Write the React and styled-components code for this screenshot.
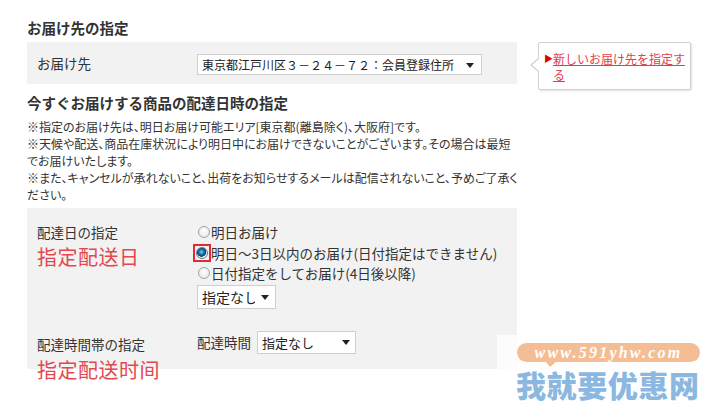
import React from 'react'
import styled, { createGlobalStyle } from 'styled-components'

const GlobalStyle = createGlobalStyle`
  html, body {
    margin: 0;
    padding: 0;
    background: #fff;
  }
  body {
    font-family: "Noto Sans CJK JP", "Noto Sans", sans-serif;
    color: #333;
  }
`

const Page = styled.div`
  position: relative;
  width: 714px;
  height: 406px;
  overflow: hidden;
  padding: 18px 0 0 27px;
  box-sizing: border-box;
`

const Heading = styled.h2`
  margin: ${p => p.$top || 0}px 0 4px;
  font-size: 14.5px;
  line-height: 20px;
  font-weight: bold;
  color: #333;
`

const TopRow = styled.div`
  display: flex;
  align-items: flex-start;
`

const AddressBox = styled.div`
  width: 490px;
  height: 42px;
  box-sizing: border-box;
  padding: 0 10px;
  background: #f2f2f2;
  display: grid;
  grid-template-columns: 160px 1fr;
  align-items: center;
`

const Label = styled.div`
  font-size: 13.5px;
  line-height: 20px;
  color: #333;
  padding-top: ${p => p.$pad || 0}px;
`

const SelectWrap = styled.span`
  position: relative;
  display: inline-block;
  &::after {
    content: '';
    position: absolute;
    right: ${p => p.$caret || 8}px;
    top: 50%;
    margin-top: -2px;
    border-left: 4px solid transparent;
    border-right: 4px solid transparent;
    border-top: 5px solid #222;
    pointer-events: none;
  }
`

const Select = styled.select`
  appearance: none;
  -webkit-appearance: none;
  display: block;
  width: ${p => p.$w}px;
  height: ${p => p.$h}px;
  box-sizing: border-box;
  margin: 0;
  padding: 0 20px 0 4px;
  border: 1px solid #cfcfcf;
  border-radius: 0;
  background: #fff;
  font-family: "Noto Sans CJK JP", sans-serif;
  font-size: ${p => p.$fs}px;
  color: #222;
  outline: none;
`

const Tip = styled.div`
  position: relative;
  margin: 0 0 -6px 21px;
  width: 153px;
  box-sizing: border-box;
  padding: 8px 3px 6px 5px;
  background: #fff;
  border: 1px solid #d2d2d2;
  border-radius: 2px;
  box-shadow: 1px 1px 2px rgba(0, 0, 0, 0.12);
  display: flex;
  &::before, &::after {
    content: '';
    position: absolute;
    top: 15px;
    border-top: 7px solid transparent;
    border-bottom: 7px solid transparent;
  }
  &::before {
    left: -9px;
    border-right: 8px solid #d2d2d2;
  }
  &::after {
    left: -7px;
    border-right: 8px solid #fff;
  }
`

const TipArrow = styled.span`
  width: 9px;
  flex: none;
  color: #e10000;
  font-size: 9px;
  line-height: 16px;
`

const TipLink = styled.a`
  width: 134px;
  font-size: 12px;
  line-height: 16px;
  color: #e0404c;
  text-decoration: underline;
  cursor: pointer;
`

const Notes = styled.div`
  width: 490px;
  margin-top: 5px;
  font-size: 12px;
  line-height: 17px;
  font-feature-settings: "palt";
  white-space: nowrap;
  color: #333;
`

const DateBox = styled.div`
  width: 490px;
  margin-top: 5px;
  box-sizing: border-box;
  padding: 14px 10px 15px;
  background: #f2f2f2;
`

const Section = styled.div`
  display: grid;
  grid-template-columns: 160px 1fr;
  margin-top: ${p => p.$top || 0}px;
`

const Annotation = styled.div`
  margin-top: ${p => p.$top}px;
  margin-bottom: ${p => p.$overhang ? -p.$overhang : 0}px;
  font-family: "Noto Sans CJK SC", "Noto Sans CJK JP", sans-serif;
  font-size: 20px;
  line-height: 24px;
  letter-spacing: 0.5px;
  color: #e3474f;
`

const RadioRow = styled.label`
  display: flex;
  align-items: center;
  height: 20.5px;
  font-size: 13.5px;
  color: #333;
  white-space: nowrap;
`

const Radio = styled.input`
  appearance: none;
  -webkit-appearance: none;
  flex: none;
  margin: 0 1px 0 1px;
  width: 12px;
  height: 12px;
  border-radius: 50%;
  border: 1px solid #a3a3a3;
  box-sizing: border-box;
  background: radial-gradient(circle at 50% 40%, #fff 0%, #e2e2e2 100%);
  &:checked {
    border-color: #5d7f99;
    background: radial-gradient(circle at 45% 40%, #7fd0f5 0%, #1b6fa6 32%, #0b3e66 55%, #dfe9f0 60%, #f4f8fb 100%);
  }
`

const Highlight = styled.span`
  display: inline-flex;
  align-items: center;
  justify-content: center;
  width: 18px;
  height: 18px;
  box-sizing: border-box;
  margin: 0 0 0 -4px;
  border: 2px solid #e22a2f;
  & > input {
    margin: 0;
  }
`

const TimeRow = styled.div`
  display: flex;
  align-items: center;
  gap: 6px;
  font-size: 13.5px;
  color: #333;
`

const Watermark = styled.div`
  position: absolute;
  left: 497px;
  top: 335px;
  width: 215px;
  height: 71px;
  background: rgba(255, 255, 255, 0.72);
`

const Pill = styled.div`
  position: absolute;
  left: 20px;
  top: 8px;
  width: 183px;
  height: 19px;
  border-radius: 10px;
  background: #f5bd94;
  color: #fff;
  font-family: "Liberation Serif", serif;
  font-style: italic;
  font-weight: bold;
  font-size: 16px;
  line-height: 19px;
  letter-spacing: 2.2px;
  text-align: center;
  &::after {
    content: '';
    position: absolute;
    left: 28px;
    bottom: -5px;
    border-left: 5px solid transparent;
    border-right: 7px solid transparent;
    border-top: 6px solid #f5bd94;
  }
`

const Brand = styled.div`
  position: absolute;
  left: 19px;
  top: 31px;
  font-family: "Noto Sans CJK SC", sans-serif;
  font-weight: 900;
  font-size: 30px;
  line-height: 36px;
  letter-spacing: 0.6px;
  color: #8bb8e0;
  white-space: nowrap;
`

function App() {
  const [day, setDay] = React.useState('soon')

  return (
    <Page>
      <GlobalStyle />
      <Heading>お届け先の指定</Heading>
      <TopRow>
        <AddressBox>
          <Label>お届け先</Label>
          <div>
            <SelectWrap $caret={8}>
              <Select $w={285} $h={21} $fs={12} defaultValue="home">
                <option value="home">東京都江戸川区３－２４－７２：会員登録住所</option>
              </Select>
            </SelectWrap>
          </div>
        </AddressBox>
        <Tip>
          <TipArrow>▶</TipArrow>
          <TipLink>新しいお届け先を指定する</TipLink>
        </Tip>
      </TopRow>

      <Heading $top={9}>今すぐお届けする商品の配達日時の指定</Heading>
      <Notes>
        ※指定のお届け先は、明日お届け可能エリア[東京都(離島除く)、大阪府]です。<br />
        ※天候や配送、商品在庫状況により明日中にお届けできないことがございます。その場合は最短<br />
        でお届けいたします。<br />
        ※また、キャンセルが承れないこと、出荷をお知らせするメールは配信されないこと、予めご了承く<br />
        ださい。
      </Notes>

      <DateBox>
        <Section>
          <div>
            <Label>配達日の指定</Label>
            <Annotation $top={3}>指定配送日</Annotation>
          </div>
          <div>
            <RadioRow>
              <Radio type="radio" name="day" checked={day === 'tomorrow'} onChange={() => setDay('tomorrow')} />
              明日お届け
            </RadioRow>
            <RadioRow>
              <Highlight>
                <Radio type="radio" name="day" checked={day === 'soon'} onChange={() => setDay('soon')} />
              </Highlight>
              明日〜3日以内のお届け(日付指定はできません)
            </RadioRow>
            <RadioRow>
              <Radio type="radio" name="day" checked={day === 'date'} onChange={() => setDay('date')} />
              日付指定をしてお届け(4日後以降)
            </RadioRow>
            <SelectWrap $caret={7}>
              <Select $w={79} $h={24} $fs={14} defaultValue="none">
                <option value="none">指定なし</option>
              </Select>
            </SelectWrap>
          </div>
        </Section>
        <Section $top={22}>
          <div>
            <Label $pad={3}>配達時間帯の指定</Label>
            <Annotation $top={4} $overhang={28}>指定配送时间</Annotation>
          </div>
          <TimeRow>
            配達時間
            <SelectWrap $caret={6}>
              <Select $w={99} $h={23} $fs={13} defaultValue="none">
                <option value="none">指定なし</option>
              </Select>
            </SelectWrap>
          </TimeRow>
        </Section>
      </DateBox>

      <Watermark>
        <Pill>www.591yhw.com</Pill>
        <Brand>我就要优惠网</Brand>
      </Watermark>
    </Page>
  )
}

export default App
